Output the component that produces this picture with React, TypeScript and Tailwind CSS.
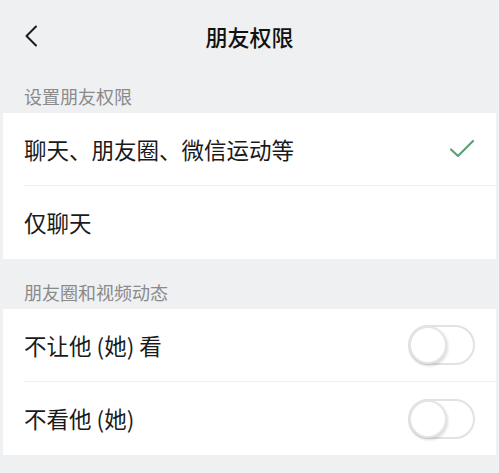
const FONT = { fontFamily: '"Noto Sans CJK SC", "Noto Sans", sans-serif' };

function Check() {
  return (
    <svg width="26" height="20" viewBox="0 0 26 20" fill="none">
      <path
        d="M2 10.5 L9 17 L24 2"
        stroke="#5f9e76"
        strokeWidth="2.2"
        strokeLinecap="round"
        strokeLinejoin="round"
      />
    </svg>
  );
}

function Toggle() {
  return (
    <div className="relative h-[40px] w-[67px] rounded-full border-2 border-[#e2e2e2] bg-white">
      <div className="absolute left-[-1px] top-[-1px] h-[38px] w-[38px] rounded-full border-2 border-[#e4e4e4] bg-white shadow-[1px_2px_3px_rgba(0,0,0,0.15)]" />
    </div>
  );
}

function Row({
  label,
  right,
  divider,
}: {
  label: string;
  right?: React.ReactNode;
  divider?: boolean;
}) {
  return (
    <div className="flex h-[73px] items-center pl-[21px]">
      <div
        className={`flex h-full flex-1 items-center pr-[21px] ${divider ? "border-b border-[#f0f0f0]" : ""}`}
      >
        <span className="flex-1 text-[22.5px] leading-none text-[#1a1a1a]">
          {label}
        </span>
        {right}
      </div>
    </div>
  );
}

export default function App() {
  return (
    <div
      className="h-[473px] w-[499px] overflow-hidden bg-[#eff0f2] px-[3px]"
      style={FONT}
    >
      <div className="relative flex h-[73px] items-center justify-center">
        <svg
          className="absolute left-[21px] top-[25px]"
          width="14"
          height="22"
          viewBox="0 0 14 22"
          fill="none"
        >
          <path
            d="M12 1.5 L2.5 11 L12 20.5"
            stroke="#1a1a1a"
            strokeWidth="2"
            strokeLinecap="round"
            strokeLinejoin="round"
          />
        </svg>
        <span className="text-[22px] font-medium text-[#111]">朋友权限</span>
      </div>
      <div className="flex h-[40px] items-center pl-[21px] pt-[6px] text-[18px] text-[#8a8a8a]">
        设置朋友权限
      </div>
      <div className="bg-white">
        <Row label="聊天、朋友圈、微信运动等" right={<Check />} divider />
        <Row label="仅聊天" />
      </div>
      <div className="flex h-[50px] items-center pl-[21px] pt-[16px] text-[18px] text-[#8a8a8a]">
        朋友圈和视频动态
      </div>
      <div className="bg-white">
        <Row label="不让他 (她) 看" right={<Toggle />} divider />
        <Row label="不看他 (她)" right={<Toggle />} />
      </div>
    </div>
  );
}
